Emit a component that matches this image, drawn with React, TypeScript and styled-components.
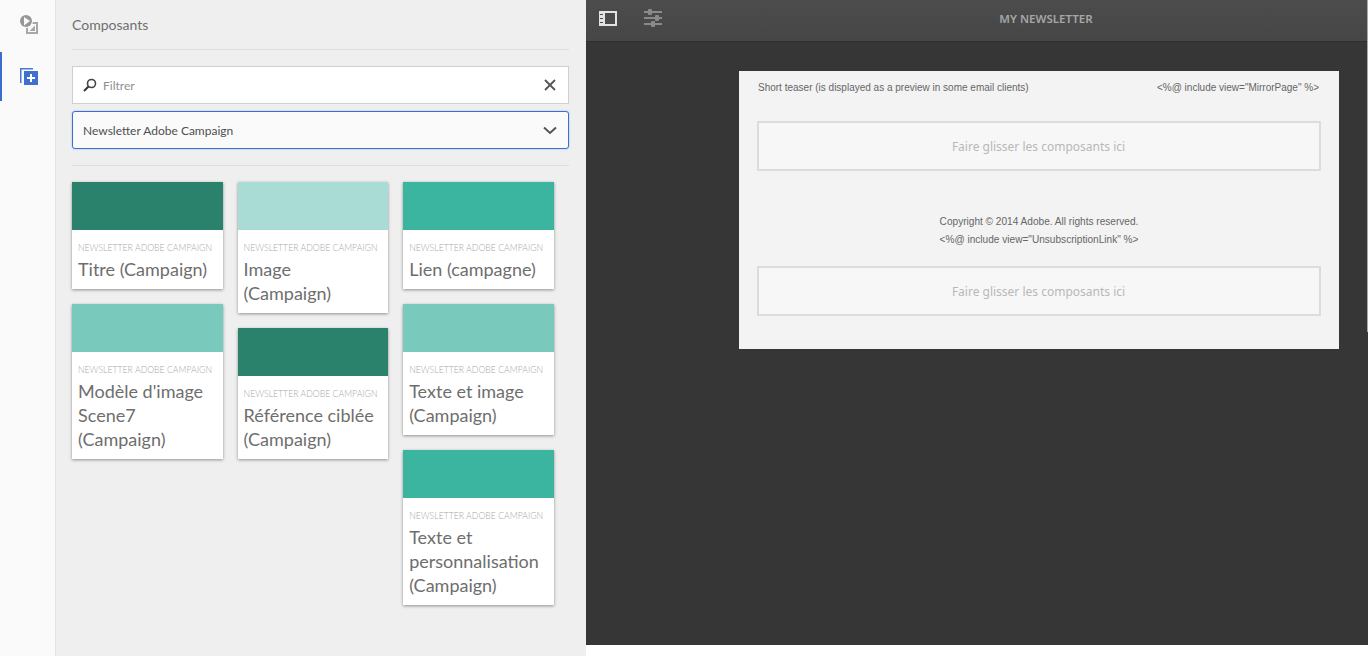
import React from "react";
import styled, { createGlobalStyle } from "styled-components";

const uiFont = `Lato, "Noto Sans", sans-serif`;
const dropFont = `"Noto Sans", "Open Sans", sans-serif`;
const mailFont = `"Liberation Sans", Arial, sans-serif`;

type CardData = { color: string; lines: string[] };

const columns: CardData[][] = [
  [
    { color: "#2a826d", lines: ["Titre (Campaign)"] },
    { color: "#79c9bc", lines: ["Modèle d'image", "Scene7", "(Campaign)"] },
  ],
  [
    { color: "#aadcd6", lines: ["Image", "(Campaign)"] },
    { color: "#2a826d", lines: ["Référence ciblée", "(Campaign)"] },
  ],
  [
    { color: "#3cb5a0", lines: ["Lien (campagne)"] },
    { color: "#79c9bc", lines: ["Texte et image", "(Campaign)"] },
    { color: "#3cb5a0", lines: ["Texte et", "personnalisation", "(Campaign)"] },
  ],
];

export default function App() {
  return (
    <>
      <GlobalStyle />
      <Page>
        <Rail>
          <RailItem>
            <svg width="18" height="19" viewBox="0 0 18 19">
              <rect x="7" y="8" width="10" height="10" fill="none" stroke="#a8a8a8" strokeWidth="2" />
              <path d="M15 10.500v5.500h-5.500z" fill="#a8a8a8" />
              <circle cx="6" cy="6" r="7" fill="#fafafa" />
              <circle cx="6" cy="6" r="6" fill="#979797" />
              <path d="M4 2l6 4-6 4.500z" fill="#fafafa" />
            </svg>
          </RailItem>
          <RailItem $active>
            <svg width="18" height="18" viewBox="0 0 18 18">
              <path d="M0 0h13v1.500h-11.500v13.500h-1.500z" fill="#4a79d6" />
              <rect x="3.500" y="2.500" width="14.500" height="14.500" fill="#fafafa" />
              <rect x="4" y="3" width="14" height="14" fill="#3f6fd0" />
              <path d="M10 6h2v3h3v2h-3v3h-2v-3h-3v-2h3z" fill="#fff" />
            </svg>
          </RailItem>
        </Rail>
        <Panel>
          <PanelTitle>Composants</PanelTitle>
          <SearchBox>
            <svg width="14" height="14" viewBox="0 0 14 14">
              <circle cx="8.500" cy="5.500" r="4" fill="none" stroke="#444" strokeWidth="1.600" />
              <path d="M5.500 8.500l-4.500 4.500" stroke="#333" strokeWidth="2" />
            </svg>
            <SearchText>Filtrer</SearchText>
            <svg width="12" height="12" viewBox="0 0 12 12">
              <path d="M1 1l10 10M11 1l-10 10" stroke="#555" strokeWidth="1.800" />
            </svg>
          </SearchBox>
          <SelectBox>
            <SelectText>Newsletter Adobe Campaign</SelectText>
            <svg width="14" height="9" viewBox="0 0 14 9">
              <path d="M1 1.500l6 5.500 6-5.500" fill="none" stroke="#555" strokeWidth="2" />
            </svg>
          </SelectBox>
          <CardGrid>
            {columns.map((col, i) => (
              <CardColumn key={i}>
                {col.map((card) => (
                  <Card key={card.lines.join(" ")}>
                    <CardBand $color={card.color} />
                    <CardBody>
                      <CardGroup>NEWSLETTER ADOBE CAMPAIGN</CardGroup>
                      <CardTitle>
                        {card.lines.map((l) => (
                          <div key={l}>{l}</div>
                        ))}
                      </CardTitle>
                    </CardBody>
                  </Card>
                ))}
              </CardColumn>
            ))}
          </CardGrid>
        </Panel>
        <Editor>
          <TopBar>
            <TopIcons>
              <svg width="20" height="18" viewBox="0 0 20 18">
                <path d="M1 2h18v15h-18z" fill="#e2e2e2" />
                <rect x="7" y="4" width="10" height="11" fill="#4a4a4a" />
                <path d="M2 5h3v1h-3zM2 9h3v1h-3zM2 13h3v1h-3z" fill="#4a4a4a" />
              </svg>
              <svg width="20" height="18" viewBox="0 0 20 18">
                <path d="M1 2h18v2h-18zM1 8h18v2h-18zM1 14h18v2h-18z" fill="#8a8a8a" />
                <rect x="5" y="0" width="4" height="6" rx="1" fill="#8a8a8a" />
                <rect x="12" y="6" width="4" height="6" rx="1" fill="#8a8a8a" />
                <rect x="8" y="12" width="4" height="6" rx="1" fill="#8a8a8a" />
              </svg>
            </TopIcons>
            <TopTitle>MY NEWSLETTER</TopTitle>
          </TopBar>
          <Canvas>
            <Sheet>
              <SheetHead>
                <span>Short teaser (is displayed as a preview in some email clients)</span>
                <span>{'<%@ include view="MirrorPage" %>'}</span>
              </SheetHead>
              <DropZone>Faire glisser les composants ici</DropZone>
              <SheetFoot>
                <div>Copyright © 2014 Adobe. All rights reserved.</div>
                <div>{'<%@ include view="UnsubscriptionLink" %>'}</div>
              </SheetFoot>
              <DropZone>Faire glisser les composants ici</DropZone>
            </Sheet>
          </Canvas>
          <BottomStrip />
          <ScrollEdge />
        </Editor>
      </Page>
    </>
  );
}

const GlobalStyle = createGlobalStyle`
  html, body { margin: 0; padding: 0; height: 100%; overflow: hidden; }
  body { font-family: ${uiFont}; background: #fff; }
  * { box-sizing: border-box; }
`;

const Page = styled.div`
  display: flex;
  width: 1368px;
  height: 656px;
`;

const Rail = styled.div`
  width: 56px;
  background: #fafafa;
  border-right: 1px solid #e4e4e4;
  flex-shrink: 0;
`;

const RailItem = styled.div<{ $active?: boolean }>`
  height: ${(p) => (p.$active ? "49px" : "52px")};
  display: flex;
  align-items: center;
  justify-content: center;
  padding: ${(p) => (p.$active ? "0 0 0 1px" : "0 0 3px 1px")};
  border-left: 2px solid ${(p) => (p.$active ? "#3a6fd0" : "transparent")};
`;

const Panel = styled.div`
  width: 530px;
  flex-shrink: 0;
  background: #efefef;
  padding: 0 17px 0 16px;
  display: flex;
  flex-direction: column;
`;

const PanelTitle = styled.div`
  height: 50px;
  line-height: 50px;
  font-size: 14px;
  color: #6f6f6f;
  border-bottom: 1px solid #dedede;
`;

const SearchBox = styled.div`
  margin-top: 16px;
  height: 38px;
  background: #fff;
  border: 1px solid #cfcfcf;
  display: flex;
  align-items: center;
  padding: 0 12px 0 10px;
`;

const SearchText = styled.span`
  flex: 1;
  margin-left: 6px;
  font-size: 12px;
  color: #8f8f8f;
`;

const SelectBox = styled.div`
  margin-top: 7px;
  height: 38px;
  background: #fafafa;
  border: 1px solid #3a6fd0;
  border-radius: 3px;
  box-shadow: 0 0 2px #9db8e8;
  display: flex;
  align-items: center;
  justify-content: space-between;
  padding: 0 11px 0 10px;
`;

const SelectText = styled.span`
  font-size: 12px;
  color: #4e4e4e;
`;

const CardGrid = styled.div`
  margin-top: 16px;
  border-top: 1px solid #dedede;
  padding-top: 16px;
  display: flex;
  gap: 15px;
`;

const CardColumn = styled.div`
  width: 150.600px;
  display: flex;
  flex-direction: column;
  gap: 15px;
`;

const Card = styled.div`
  background: #fff;
  box-shadow: 0 1px 3px rgba(0, 0, 0, 0.4);
`;

const CardBand = styled.div<{ $color: string }>`
  height: 48px;
  background: ${(p) => p.$color};
`;

const CardBody = styled.div`
  padding: 11px 6px 8px;
`;

const CardGroup = styled.div`
  font-size: 8.700px;
  font-weight: 300;
  line-height: 14px;
  color: #a8a8a8;
  white-space: nowrap;
`;

const CardTitle = styled.div`
  margin-top: 2px;
  font-size: 18px;
  line-height: 24px;
  color: #6e6e6e;
`;

const Editor = styled.div`
  flex: 1;
  display: flex;
  flex-direction: column;
  background: #363636;
  position: relative;
`;

const TopBar = styled.div`
  height: 42px;
  flex-shrink: 0;
  background: linear-gradient(#4c4c4c, #464646);
  border-bottom: 1px solid #2e2e2e;
  display: flex;
  align-items: center;
  position: relative;
`;

const TopIcons = styled.div`
  display: flex;
  gap: 25px;
  padding: 0 0 5px 12px;
  align-items: center;
`;

const TopTitle = styled.div`
  position: absolute;
  left: 0;
  right: 0;
  top: 12px;
  padding-left: 123px;
  text-align: center;
  font-family: ${dropFont};
  font-size: 11.500px;
  line-height: 14px;
  font-weight: 600;
  color: #a6a6a6;
  text-indent: 15px;
`;

const Canvas = styled.div`
  flex: 1;
  padding: 29px 29px 0 153px;
`;

const Sheet = styled.div`
  width: 600px;
  height: 278px;
  background: #f3f3f3;
  padding: 0 18px;
`;

const SheetHead = styled.div`
  display: flex;
  justify-content: space-between;
  height: 50px;
  padding: 10px 2px 0 1px;
  font-family: ${mailFont};
  font-size: 10px;
  line-height: 14px;
  color: #666;
`;

const DropZone = styled.div`
  height: 50px;
  background: #f7f7f7;
  border: 2px solid #dcdcdc;
  padding-right: 1px;
  display: flex;
  align-items: center;
  justify-content: center;
  font-family: ${dropFont};
  font-size: 12px;
  color: #b8b8b8;
`;

const SheetFoot = styled.div`
  height: 95px;
  padding-top: 42px;
  text-align: center;
  font-family: ${mailFont};
  font-size: 10.100px;
  line-height: 18px;
  color: #666;
`;

const BottomStrip = styled.div`
  height: 11px;
  flex-shrink: 0;
  background: #fff;
`;

const ScrollEdge = styled.div`
  position: absolute;
  top: 0;
  right: 0;
  width: 1px;
  height: 332px;
  background: #a8a8a8;
`;
